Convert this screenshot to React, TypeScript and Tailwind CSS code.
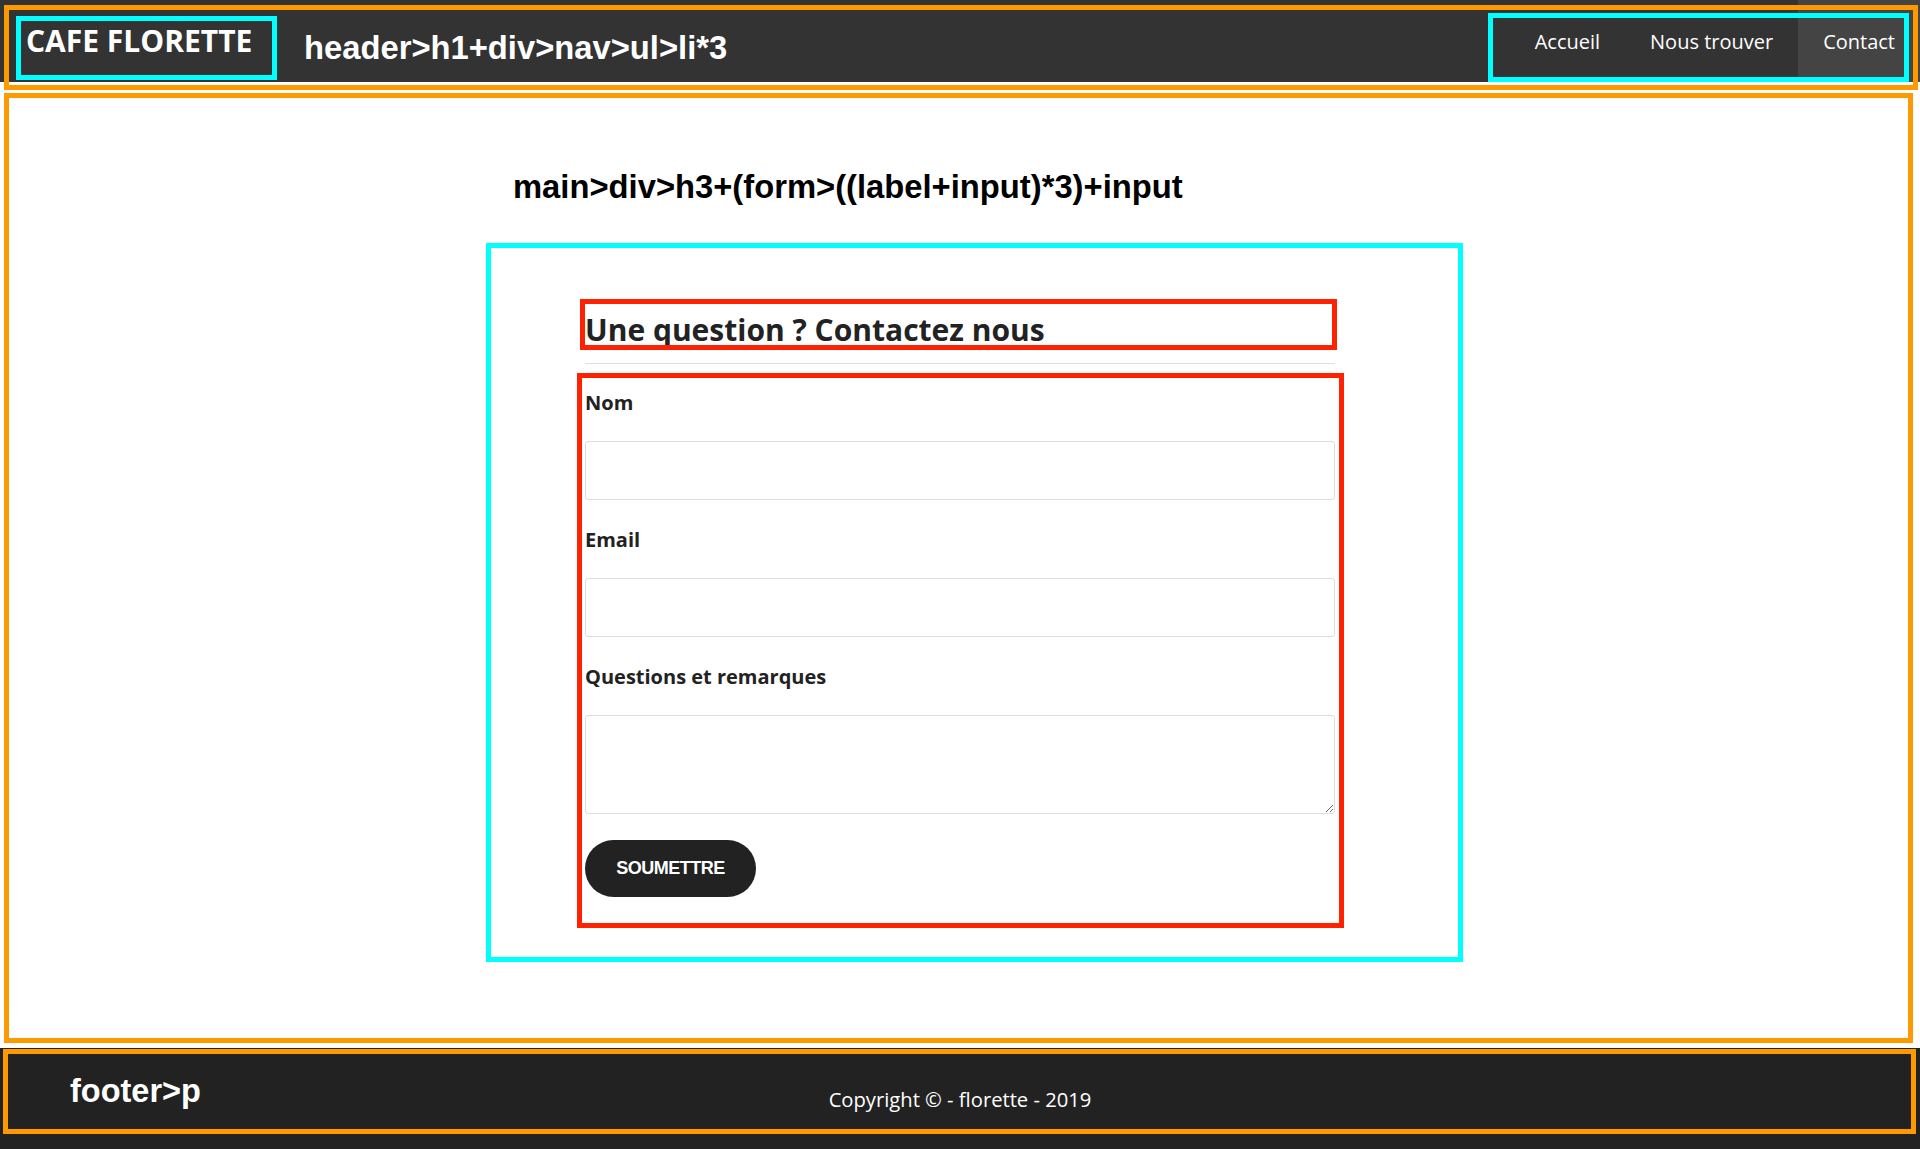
import React from "react";

// annotation frames drawn over the page (orange = sections, cyan = blocks, red = children)
function Frame({ className }: { className: string }) {
    return <div className={`absolute pointer-events-none ${className}`} />;
}

const sans = "font-['Open_Sans',sans-serif]";
const note = "font-['Liberation_Sans',Arial,sans-serif] font-bold text-[32.75px] leading-[38px] whitespace-nowrap";

export default function App() {
    return (
        <div className={`relative w-full bg-white ${sans}`}>
            {/* Header */}
            <header className="flex items-center h-[82px] bg-[#333333] text-white">
                <div className="w-[304px] shrink-0 pl-[26px]">
                    <h1 className="text-[30px] leading-[40px] font-bold">CAFE FLORETTE</h1>
                </div>
                <span className={`${note} mt-[14px]`}>header&gt;h1+div&gt;nav&gt;ul&gt;li*3</span>
                <nav className="ml-auto h-full">
                    <ul className="flex h-full text-[20px]">
                        <li className="flex items-center px-[25px] pt-[2px]">Accueil</li>
                        <li className="flex items-center px-[25px] pt-[2px]">Nous trouver</li>
                        <li className="flex items-center px-[25px] pt-[2px] bg-[#444444]">Contact</li>
                    </ul>
                </nav>
            </header>

            {/* Main */}
            <main className="h-[966px] pt-[86px]">
                <div className="w-[750px] mx-auto text-[#222222]">
                    <div className={`${note} -ml-[72px] text-black`}>
                        main&gt;div&gt;h3+(form&gt;((label+input)*3)+input
                    </div>

                    <h3 className="mt-[104px] text-[30px] leading-[40px] font-bold">
                        Une question ? Contactez nous
                    </h3>
                    <div className="mt-[13px] h-px bg-[#dddddd]" />

                    <form className="flex flex-col">
                        <label className="mt-[25px] block text-[20px] leading-[27px] font-bold">Nom</label>
                        <input type="text" className="mt-[25px] w-full h-[59px] border border-[#dddddd] rounded-[3px] px-3 outline-none" />

                        <label className="mt-[26px] block text-[20px] leading-[27px] font-bold">Email</label>
                        <input type="email" className="mt-[25px] w-full h-[59px] border border-[#dddddd] rounded-[3px] px-3 outline-none" />

                        <label className="mt-[26px] block text-[20px] leading-[27px] font-bold">Questions et remarques</label>
                        <textarea className="mt-[25px] block w-full h-[99px] border border-[#dddddd] rounded-[3px] px-3 outline-none" />

                        <div className="mt-[26px]">
                            <button
                                type="button"
                                className="h-[57px] w-[171px] rounded-full bg-[#222222] text-white font-['Liberation_Sans',Arial,sans-serif] font-bold text-[18px] tracking-[-0.5px]"
                            >
                                SOUMETTRE
                            </button>
                        </div>
                    </form>
                </div>
            </main>

            {/* Footer */}
            <footer className="grid grid-cols-[1fr_auto_1fr] h-[101px] bg-[#222222] text-white">
                <div className="pl-[70px] pt-[25px]">
                    <span className="font-['Liberation_Sans',Arial,sans-serif] font-bold text-[32.5px] leading-[37px] block">footer&gt;p</span>
                </div>
                <p className="pt-[38px] text-[20.2px] leading-[27px]">Copyright © - florette - 2019</p>
                <div />
            </footer>

            <Frame className="left-[4px] top-[5px] w-[1914px] h-[85px] border-[5px] border-[#ff9900]" />
            <Frame className="left-[16px] top-[16px] w-[261px] h-[64px] border-[5px] border-[#00ffff]" />
            <Frame className="left-[1488px] top-[13px] w-[421px] h-[69px] border-[5px] border-[#00ffff]" />
            <Frame className="left-[4px] top-[93px] w-[1909px] h-[950px] border-[5px] border-[#ff9900]" />
            <Frame className="left-[486px] top-[243px] w-[977px] h-[719px] border-[5px] border-[#00ffff]" />
            <Frame className="left-[580px] top-[299px] w-[757px] h-[51px] border-[5px] border-[#ff2200]" />
            <Frame className="left-[577px] top-[373px] w-[767px] h-[555px] border-[5px] border-[#ff2200]" />
            <Frame className="left-[3px] top-[1049px] w-[1913px] h-[85px] border-[5px] border-[#ff9900]" />
        </div>
    );
}
